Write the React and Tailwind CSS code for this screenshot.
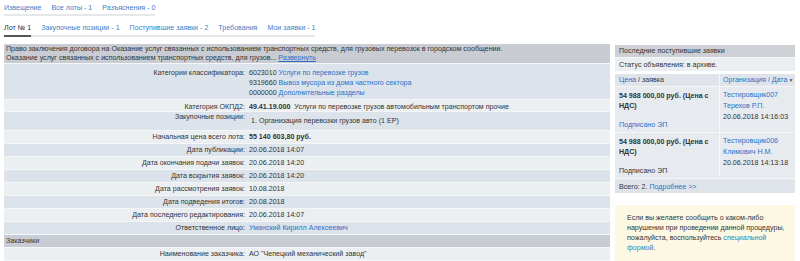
const rows = [
  { label: "Начальная цена всего лота:", value: <b>55 140 603,80 руб.</b> },
  { label: "Дата публикации:", value: "20.06.2018 14:07" },
  { label: "Дата окончания подачи заявок:", value: "20.06.2018 14:20" },
  { label: "Дата вскрытия заявок:", value: "20.06.2018 14:20" },
  { label: "Дата рассмотрения заявок:", value: "10.08.2018" },
  { label: "Дата подведения итогов:", value: "20.08.2018" },
  { label: "Дата последнего редактирования:", value: "20.06.2018 14:07" },
  {
    label: "Ответственное лицо:",
    value: <a className="text-[#2a6fc9]">Уманский Кирилл Алексеевич</a>,
  },
];

const bids = [
  { org: "Тестировщик007", person: "Терехов Р.П.", date: "20.06.2018 14:16:03", link: true },
  { org: "Тестировщик006", person: "Климович Н.М.", date: "20.06.2018 14:13:18", link: false },
];

function Row({ label, children, light, className = "h-[13px] pt-[1px]" }) {
  return (
    <div
      className={`grid grid-cols-[245px_1fr] border-b border-[#f4f6f8] box-border ${
        light ? "bg-[#eceff2]" : "bg-[#dde3ea]"
      } ${className}`}>
      <div className="text-right pr-[4px]">{label}</div>
      <div>{children}</div>
    </div>
  );
}

export default function App() {
  return (
    <div className="w-[800px] h-[261px] overflow-hidden bg-white font-['Liberation_Sans',Arial,sans-serif] text-[7.1px] leading-[10px] text-[#333]">
      <div className="pl-[4px] pt-[3px]">
        <div className="inline-flex gap-[10px] border-b-2 border-[#e6e7e8] pb-[1px] text-[#3d7fc6]">
          <a>Извещение</a>
          <a>Все лоты - 1</a>
          <a>Разъяснения - 0</a>
        </div>
        <div className="mt-[7px]">
          <div className="inline-flex gap-[10px] border-b-2 border-[#e6e7e8] text-[#3d7fc6]">
            <span className="text-[#333] border-b-2 border-[#555] mb-[-2px] pb-[2px]">
              Лот № 1
            </span>
            <a className="pb-[2px]">Закупочные позиции - 1</a>
            <a className="pb-[2px]">Поступившие заявки - 2</a>
            <a className="pb-[2px]">Требования</a>
            <a className="pb-[2px]">Мои заявки - 1</a>
          </div>
        </div>
      </div>

      <div className="flex gap-[5px] px-[4px] mt-[7px]">
        <div className="w-[606px]">
          <div className="bg-[#c9cdd3] px-[2px] h-[20px] border-b border-[#f4f6f8] box-border">
            <p>
              Право заключения договора на Оказание услуг связанных с использованием
              транспортных средств, для грузовых перевозок в городском сообщении.
            </p>
            <p className="mt-[-1px]">
              Оказание услуг связанных с использованием транспортных средств, для
              грузов...{" "}
              <a className="text-[#2a6fc9] underline">Развернуть</a>
            </p>
          </div>
          <Row label="Категории классификатора:" className="h-[36px] pt-[4px]">
            <p>
              6023010 <a className="text-[#2a6fc9]">Услуги по перевозке грузов</a>
            </p>
            <p>
              9319660{" "}
              <a className="text-[#2a6fc9]">Вывоз мусора из дома частного сектора</a>
            </p>
            <p>
              0000000 <a className="text-[#2a6fc9]">Дополнительные разделы</a>
            </p>
          </Row>
          <Row label="Категория ОКПД2:" light className="h-[12px] pt-[2px]">
            <b>49.41.19.000</b>&nbsp; Услуги по перевозке грузов автомобильным
            транспортом прочие
          </Row>
          <Row label="Закупочные позиции:" className="h-[19px] pt-[0px]">
            <p className="pt-[4px] pl-[2px]">1. Организация перевозки грузов авто (1 ЕР)</p>
          </Row>
          {rows.map((r, i) => (
            <Row key={r.label} label={r.label} light={i % 2 === 0}>
              {r.value}
            </Row>
          ))}
          <div className="bg-[#c8ccd4] px-[2px] h-[13px] pt-[1px] border-b border-[#f4f6f8] box-border">
            Заказчики
          </div>
          <Row label="Наименование заказчика:" light>
            АО "Чепецкий механический завод"
          </Row>
        </div>

        <div className="w-[180px] pt-[1px]">
          <div className="bg-[#cdd1d6] px-[4px] h-[13px] pt-[1px] border-b border-[#f4f6f8] box-border">
            Последние поступившие заявки
          </div>
          <div className="bg-[#eceff2] px-[4px] h-[13px] pt-[2px] mb-[3px]">
            Статус объявления: в архиве.
          </div>
          <div className="grid grid-cols-[105px_1fr] bg-[#dfe4ea] h-[13px] border-b border-[#f4f6f8] box-border">
            <div className="px-[4px] pt-[1px] border-r border-[#f4f6f8]">
              <a className="text-[#2a6fc9]">Цена</a> / заявка
            </div>
            <div className="pl-[3px] pt-[1px] text-[#2a6fc9] whitespace-nowrap">
              Организация / Дата<span className="text-[#555] text-[5px] ml-[1px]">▼</span>
            </div>
          </div>
          {bids.map((b) => (
            <div
              key={b.org}
              className="grid grid-cols-[105px_1fr] bg-[#e7ebf0] h-[46px] border-b border-[#f4f6f8] box-border">
              <div className="px-[4px] pt-[4px] border-r border-[#f4f6f8]">
                <p className="font-bold">54 988 000,00 руб. (Цена с НДС)</p>
                <p className="mt-[9px]">
                  {b.link ? <a className="text-[#2a6fc9]">Подписано ЭП</a> : "Подписано ЭП"}
                </p>
              </div>
              <div className="pl-[3px] pt-[3px] leading-[11px]">
                <a className="block text-[#2a6fc9]">{b.org}</a>
                <a className="block text-[#2a6fc9]">{b.person}</a>
                <p>{b.date}</p>
              </div>
            </div>
          ))}
          <div className="bg-[#dfe4ea] px-[4px] h-[14px] pt-[3px]">
            Всего: 2. <a className="text-[#2a6fc9]">Подробнее &gt;&gt;</a>
          </div>
          <div className="mt-[12px] bg-[#fcf8e3] pl-[12px] pr-[6px] pt-[8px] pb-[10px]">
            Если вы желаете сообщить о каком-либо нарушении при проведении данной
            процедуры, пожалуйста, воспользуйтесь{" "}
            <a className="text-[#2a84c9]">специальной формой</a>.
          </div>
        </div>
      </div>
    </div>
  );
}
